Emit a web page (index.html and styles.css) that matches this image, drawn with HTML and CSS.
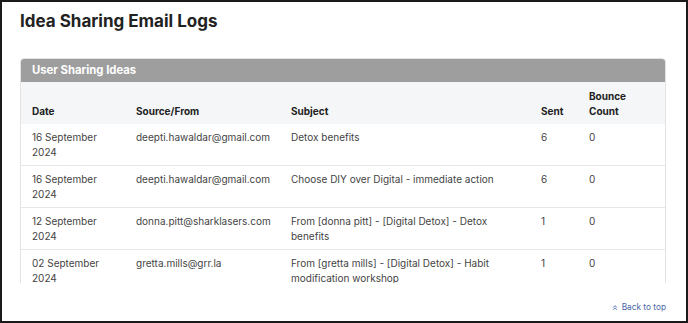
FILE: index.html
```html
<!DOCTYPE html>
<html lang="en">
<head>
  <meta charset="UTF-8" />
  <title>Idea Sharing Email Logs</title>
  <link rel="stylesheet" href="styles.css">
</head>
<body>
  <div class="page">
    <h1>Idea Sharing Email Logs</h1>

    <div class="scroll-area">
      <div class="card">
        <div class="card-header">User Sharing Ideas</div>
        <table class="log-table">
          <colgroup>
            <col class="col-date">
            <col class="col-from">
            <col class="col-subject">
            <col class="col-sent">
            <col class="col-bounce">
          </colgroup>
          <thead>
            <tr>
              <th>Date</th>
              <th>Source/From</th>
              <th>Subject</th>
              <th>Sent</th>
              <th>Bounce<br>Count</th>
            </tr>
          </thead>
          <tbody>
            <tr>
              <td>16 September<br>2024</td>
              <td>deepti.hawaldar@gmail.com</td>
              <td>Detox benefits</td>
              <td>6</td>
              <td>0</td>
            </tr>
            <tr>
              <td>16 September<br>2024</td>
              <td>deepti.hawaldar@gmail.com</td>
              <td>Choose DIY over Digital - immediate action</td>
              <td>6</td>
              <td>0</td>
            </tr>
            <tr>
              <td>12 September<br>2024</td>
              <td>donna.pitt@sharklasers.com</td>
              <td>From [donna pitt] - [Digital Detox] - Detox benefits</td>
              <td>1</td>
              <td>0</td>
            </tr>
            <tr>
              <td>02 September<br>2024</td>
              <td>gretta.mills@grr.la</td>
              <td>From [gretta mills] - [Digital Detox] - Habit modification workshop</td>
              <td>1</td>
              <td>0</td>
            </tr>
          </tbody>
        </table>
      </div>
    </div>

    <div class="footer">
      <a class="back-top" href="#">
        <svg width="6" height="7" viewBox="0 0 8 8" aria-hidden="true">
          <path d="M1.5 4 L4 1.5 L6.5 4 M1.5 7 L4 4.5 L6.5 7" fill="none" stroke="currentColor" stroke-width="1.2"/>
        </svg>
        Back to top
      </a>
    </div>
  </div>
</body>
</html>
```

FILE: styles.css
```css
html, body {
  margin: 0;
  padding: 0;
}

body {
  font-family: 'Inter', 'Noto Sans', sans-serif;
  color: #444;
  background: #fff;
}

.page {
  box-sizing: border-box;
  width: 688px;
  height: 323px;
  border: 2px solid #1a1a1a;
  padding: 0 18px;
  overflow: hidden;
}

h1 {
  margin: 0;
  padding-top: 8px;
  height: 48px;
  font-size: 17px;
  font-weight: 700;
  color: #222;
  line-height: 22px;
}

.scroll-area {
  height: 225px;
  overflow-y: scroll;
  padding-right: 2px;
}

.scroll-area::-webkit-scrollbar {
  width: 6px;
}

.scroll-area::-webkit-scrollbar-track {
  background: #f3f3f3;
}

.scroll-area::-webkit-scrollbar-thumb {
  background: #c6c6c6;
  border-radius: 3px;
  border: 1px solid #f3f3f3;
}

.card {
  border: 1px solid #e3e3e3;
  border-radius: 4px 4px 0 0;
  margin-bottom: 52px;
}

.card-header {
  background: #9e9e9e;
  color: #fff;
  font-size: 11.3px;
  font-weight: 700;
  height: 23px;
  line-height: 23px;
  padding: 0 11px;
  border-radius: 3px 3px 0 0;
}

.log-table {
  width: 100%;
  table-layout: fixed;
  border-collapse: collapse;
  font-size: 10px;
  line-height: 15px;
}

.col-date { width: 104px; }
.col-from { width: 155px; }
.col-subject { width: 250px; }
.col-sent { width: 48px; }

.log-table th {
  background: #f5f6f8;
  color: #222;
  font-weight: 700;
  text-align: left;
  vertical-align: bottom;
  padding: 7px 11px 5px;
  height: 30px;
}

.log-table td {
  text-align: left;
  vertical-align: top;
  padding: 6px 11px 5px;
  height: 30px;
  border-top: 1px solid #e6e6e6;
}

.log-table tbody tr:first-child td {
  border-top: none;
}

.footer {
  display: flex;
  justify-content: flex-end;
  padding-top: 19px;
  padding-right: 2px;
}

.back-top {
  font-size: 8.3px;
  color: #4a67a6;
  text-decoration: none;
  display: flex;
  align-items: center;
  gap: 4px;
}
```
